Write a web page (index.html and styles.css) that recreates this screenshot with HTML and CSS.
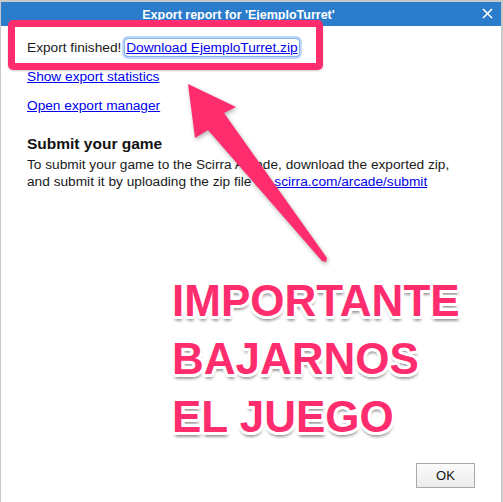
FILE: index.html
```html
<!DOCTYPE html>
<html>
<head>
<meta charset="utf-8">
<link rel="stylesheet" href="styles.css">
</head>
<body>
<div class="window">
  <div class="titlebar">
    <span class="title">Export report for 'EjemploTurret'</span>
    <svg class="close" width="11" height="11" viewBox="0 0 11 11"><path d="M1 1 L10 10 M10 1 L1 10" stroke="#fff" stroke-width="1.6" fill="none"/></svg>
  </div>
  <div class="content">
    <div class="line">Export finished! <a class="link focus" href="#">Download EjemploTurret.zip</a></div>
    <div class="line gap"><a class="link" href="#">Show export statistics</a></div>
    <div class="line gap"><a class="link" href="#">Open export manager</a></div>
    <h2 class="heading">Submit your game</h2>
    <p class="para">To submit your game to the Scirra Arcade, download the exported zip, and submit it by uploading the zip file at: <a class="link" href="#">scirra.com/arcade/submit</a></p>
  </div>
  <div class="footer">
    <button class="ok">OK</button>
  </div>
</div>

<div class="highlight"></div>
<svg class="arrow" width="503" height="502" viewBox="0 0 503 502">
  <polygon points="188,84 236,107 224,113 327,258 326,262 322,261 208,130 195,138" fill="#ff2d6d"/>
</svg>
<div class="shout">IMPORTANTE<br>BAJARNOS<br>EL JUEGO</div>
</body>
</html>
```
FILE: styles.css
```css
html, body {
  margin: 0;
  padding: 0;
  background: #c9c9c9;
}
body {
  width: 503px;
  height: 502px;
  overflow: hidden;
  position: relative;
  font-family: "Liberation Sans", Arial, sans-serif;
}
.window {
  box-sizing: border-box;
  width: 503px;
  height: 502px;
  border-top: 2px solid #c9c9c9;
  border-left: 1px solid #c9c9c9;
  border-right: 2px solid #c9c9c9;
  background: #fff;
  display: flex;
  flex-direction: column;
}
.titlebar {
  height: 24px;
  background: #2b7ccb;
  color: #fff;
  display: flex;
  align-items: center;
  position: relative;
}
.title {
  flex: 1;
  text-align: center;
  font-weight: bold;
  font-size: 12.5px;
  padding-left: 4px;
  padding-right: 10px;
  padding-top: 1px;
}
.close {
  margin-right: 8px;
  margin-top: -2px;
}
.content {
  flex: 1;
  padding: 13px 0 0 26px;
  font-size: 13.7px;
  color: #1a1a1a;
}
.line {
  line-height: 18px;
  height: 18px;
}
.gap {
  margin-top: 11px;
}
.link {
  color: #0000ee;
  text-decoration: underline;
}
.focus {
  border-radius: 3px;
  box-shadow: 0 0 0 1px #86b3ee, 0 0 0 3px rgba(140, 185, 245, 0.55);
  padding: 1px 1px;
}
.heading {
  margin: 19px 0 0 0;
  font-size: 15.5px;
  line-height: 20px;
  font-weight: bold;
  color: #111;
}
.para {
  margin: 2px 0 0 0;
  line-height: 17px;
  width: 445px;
}
.footer {
  display: flex;
  justify-content: flex-end;
  padding: 0 26px 14px 0;
}
.ok {
  width: 59px;
  height: 25px;
  border: 1px solid #a9a9a9;
  background: linear-gradient(#fbfbfb, #ececec);
  font-family: "Liberation Sans", Arial, sans-serif;
  font-size: 13px;
  color: #111;
  padding: 0;
}
.highlight {
  position: absolute;
  left: 8px;
  top: 20px;
  width: 315px;
  height: 50px;
  box-sizing: border-box;
  border: 7px solid #ff2d6d;
  border-radius: 5px;
  box-shadow: 0 1px 2px rgba(0, 0, 0, 0.2);
}
.arrow {
  position: absolute;
  left: 0;
  top: 0;
  filter: drop-shadow(1px 2px 2px rgba(0, 0, 0, 0.3));
}
.shout {
  position: absolute;
  left: 172px;
  top: 272px;
  font-family: "Liberation Sans", Arial, sans-serif;
  font-weight: bold;
  font-size: 44px;
  line-height: 58px;
  color: #ff2d6d;
  white-space: nowrap;
  text-shadow:
    3px 0 0 #fff, -3px 0 0 #fff, 0 3px 0 #fff, 0 -3px 0 #fff,
    2px 2px 0 #fff, -2px 2px 0 #fff, 2px -2px 0 #fff, -2px -2px 0 #fff,
    1px 3px 0 #fff, -1px 3px 0 #fff, 3px 1px 0 #fff, -3px 1px 0 #fff,
    1px 5px 3px rgba(0, 0, 0, 0.3), -1px 4px 3px rgba(0, 0, 0, 0.2);
}
```
